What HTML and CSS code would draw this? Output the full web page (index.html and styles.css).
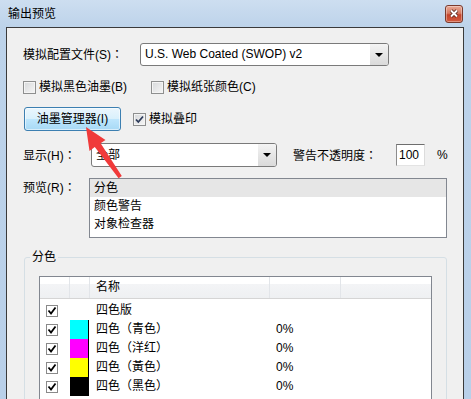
FILE: index.html
```html
<!DOCTYPE html>
<html><head><meta charset="UTF-8">
<title>输出预览</title>
<link rel="stylesheet" href="styles.css">
</head>
<body>
<div class="window">
  <div class="titlebar">
    <span class="title">输出预览</span>
    <span class="close">
      <svg width="10" height="9" viewBox="0 0 10 9">
        <path d="M2 1.5L8 7.5M8 1.5L2 7.5" stroke="#5b2a20" stroke-width="3.6" fill="none"/>
        <path d="M2 1.5L8 7.5M8 1.5L2 7.5" stroke="#fff" stroke-width="1.8" fill="none"/>
      </svg>
    </span>
  </div>

  <div class="client">
    <div class="row row-profile">
      <span class="lbl lbl-profile">模拟配置文件(S)<span class="colon">：</span></span>
      <div class="combo combo-profile">
        <span class="combo-text">U.S. Web Coated (SWOP) v2</span>
        <span class="combo-btn"><i class="tri"></i></span>
      </div>
    </div>

    <div class="row row-sim">
      <label class="check check-ink"><span class="box"></span>模拟黑色油墨(B)</label>
      <label class="check"><span class="box"></span>模拟纸张颜色(C)</label>
    </div>

    <div class="row row-manager">
      <button class="btn">油墨管理器(I)</button>
      <label class="check check-over">
        <span class="box">
          <svg width="11" height="11" viewBox="0 0 11 11"><path d="M2 5.5L4.3 8L9 2.5" stroke="#2d3b5a" stroke-width="1.8" fill="none"/></svg>
        </span>模拟叠印
      </label>
    </div>

    <div class="row row-display">
      <span class="lbl lbl-display">显示(H)<span class="colon">：</span></span>
      <div class="combo combo-display">
        <span class="combo-text">全部</span>
        <span class="combo-btn"><i class="tri"></i></span>
      </div>
      <span class="lbl lbl-warn">警告不透明度<span class="colon">：</span></span>
      <span class="num">100</span>
      <span class="pct">%</span>
    </div>

    <div class="row row-preview">
      <span class="lbl lbl-preview">预览(R)<span class="colon">：</span></span>
      <div class="listbox">
        <div class="item sel">分色</div>
        <div class="item">颜色警告</div>
        <div class="item">对象检查器</div>
      </div>
    </div>

    <fieldset class="group">
      <legend>分色</legend>
      <div class="table">
        <div class="thead">
          <span class="th"></span>
          <span class="th"></span>
          <span class="th th-name">名称</span>
          <span class="th"></span>
          <span class="th th-last"></span>
        </div>
        <div class="tbody">
          <div class="tr">
            <span class="td"><span class="mini"><svg width="10" height="10" viewBox="0 0 10 10"><path d="M1.5 4.5L4 7.5L8.5 1.5" stroke="#000" stroke-width="1.8" fill="none"/></svg></span></span>
            <span class="td"></span>
            <span class="td td-name">四色版</span>
            <span class="td"></span>
            <span class="td"></span>
          </div>
          <div class="tr">
            <span class="td"><span class="mini"><svg width="10" height="10" viewBox="0 0 10 10"><path d="M1.5 4.5L4 7.5L8.5 1.5" stroke="#000" stroke-width="1.8" fill="none"/></svg></span></span>
            <span class="td"><span class="swatch cyan"></span></span>
            <span class="td td-name">四色（青色）</span>
            <span class="td td-val">0%</span>
            <span class="td"></span>
          </div>
          <div class="tr">
            <span class="td"><span class="mini"><svg width="10" height="10" viewBox="0 0 10 10"><path d="M1.5 4.5L4 7.5L8.5 1.5" stroke="#000" stroke-width="1.8" fill="none"/></svg></span></span>
            <span class="td"><span class="swatch magenta"></span></span>
            <span class="td td-name">四色（洋红）</span>
            <span class="td td-val">0%</span>
            <span class="td"></span>
          </div>
          <div class="tr">
            <span class="td"><span class="mini"><svg width="10" height="10" viewBox="0 0 10 10"><path d="M1.5 4.5L4 7.5L8.5 1.5" stroke="#000" stroke-width="1.8" fill="none"/></svg></span></span>
            <span class="td"><span class="swatch yellow"></span></span>
            <span class="td td-name">四色（黃色）</span>
            <span class="td td-val">0%</span>
            <span class="td"></span>
          </div>
          <div class="tr">
            <span class="td"><span class="mini"><svg width="10" height="10" viewBox="0 0 10 10"><path d="M1.5 4.5L4 7.5L8.5 1.5" stroke="#000" stroke-width="1.8" fill="none"/></svg></span></span>
            <span class="td"><span class="swatch black"></span></span>
            <span class="td td-name">四色（黑色）</span>
            <span class="td td-val">0%</span>
            <span class="td"></span>
          </div>
        </div>
      </div>
    </fieldset>
  </div>

  <!-- red pointer drawn over the dialog -->
  <svg class="pointer" width="471" height="399" viewBox="0 0 471 399">
    <polygon points="86,127 105.5,140 100.6,143.2 121.8,176 118.6,178.2 94.8,147 89.5,151" fill="#f03a3a"/>
  </svg>
</div>
</body></html>
```

FILE: styles.css
```css
* {
  box-sizing: border-box;
}

body {
  margin: 0;
  font: 12px/16px "Liberation Sans", "Noto Sans CJK SC", sans-serif;
  color: #000;
  overflow: hidden;
}

.window {
  position: relative;
  width: 471px;
  height: 399px;
  overflow: hidden;
  background: linear-gradient(#cddef0, #bdd3ea 27px, #b9d0e9);
}

.titlebar {
  height: 27px;
  display: flex;
  align-items: center;
  justify-content: space-between;
  padding: 0 8px;
}

.title {
  padding-top: 1px;
}

.close {
  width: 18px;
  height: 18px;
  border: 1px solid #7b3a2c;
  border-radius: 3px;
  background: linear-gradient(#e9a894, #d67a62 45%, #c4432a 55%, #d25a3e);
  box-shadow: inset 0 0 0 1px rgba(255,255,255,0.35);
  display: flex;
  align-items: center;
  justify-content: center;
}

.client {
  margin-left: 6px;
  width: 458px;
  height: 380px;
  border: 1px solid #3a3a3a;
  border-bottom: none;
  background: #f0f0f0;
  padding: 15px 0 0 16px;
}

.colon {
  font-family: "Noto Sans CJK TC", sans-serif;
}

.row {
  display: flex;
  align-items: center;
}

.row-profile {
  height: 23px;
}

.lbl-profile {
  width: 117px;
}

.combo {
  display: flex;
  border: 1px solid #7a7a7a;
  border-radius: 3px;
  background: #fff;
  overflow: hidden;
}

.combo-profile {
  width: 249px;
  height: 23px;
}

.combo-text {
  flex: 1;
  padding-left: 4px;
  line-height: 21px;
}

.combo-btn {
  width: 18px;
  display: flex;
  align-items: center;
  justify-content: center;
  background: linear-gradient(#f4f4f4, #e6e6e6 50%, #dadada);
}

.tri {
  width: 0;
  height: 0;
  border-left: 4px solid transparent;
  border-right: 4px solid transparent;
  border-top: 4px solid #000;
}

.row-sim {
  margin-top: 12px;
  height: 18px;
}

.check {
  display: flex;
  align-items: center;
  gap: 3px;
}

.check-ink {
  width: 128px;
}

.box {
  width: 13px;
  height: 13px;
  border: 1px solid #8e8f8f;
  background: linear-gradient(135deg, #d6d8da, #f6f6f6);
  box-shadow: inset 0 0 0 1px #f4f4f4;
  display: flex;
  align-items: center;
  justify-content: center;
}

.row-manager {
  margin-top: 11px;
  height: 24px;
}

.btn {
  margin-left: 1px;
  width: 97px;
  height: 24px;
  padding: 0;
  font: inherit;
  color: #000;
  border: 1px solid #3c7fb1;
  border-radius: 3px;
  background: linear-gradient(#eaf6fd, #d9f0fc 50%, #bee6fd 50%, #a7d9f5);
  box-shadow: inset 0 0 0 1px rgba(255,255,255,0.55);
}

.check-over {
  margin-left: 12px;
}

.row-display {
  margin-top: 12px;
  height: 24px;
}

.lbl-display {
  width: 68px;
}

.combo-display {
  width: 186px;
  height: 24px;
}

.combo-display .combo-text {
  line-height: 22px;
}

.lbl-warn {
  margin-left: 16px;
  width: 103px;
}

.num {
  width: 29px;
  height: 22px;
  padding-left: 2px;
  line-height: 20px;
  background: #fff;
  border: 1px solid;
  border-color: #6e6e6e #dcdcdc #e3e3e3 #8c8c8c;
}

.pct {
  margin-left: 12px;
}

.row-preview {
  margin-top: 11px;
  align-items: flex-start;
}

.lbl-preview {
  width: 66px;
  padding-top: 1px;
}

.listbox {
  width: 358px;
  height: 60px;
  border: 1px solid #828790;
  background: #fff;
}

.item {
  height: 18px;
  line-height: 18px;
  padding-left: 4px;
}

.item.sel {
  background: #e6e6e6;
}

.group {
  margin: 12px 0 0 1px;
  padding: 0;
  width: 423px;
  height: 200px;
  border: 1px solid #d5dfe5;
  border-radius: 3px;
}

.group legend {
  margin-left: 5px;
  padding: 0 2px;
  line-height: 14px;
}

.table {
  margin: 12px 14px 0;
  height: 160px;
  border: 1px solid #828790;
  background: #fff;
}

.thead, .tr {
  display: grid;
  grid-template-columns: 30px 20px 180px 71px 1fr;
}

.thead {
  height: 22px;
  border-bottom: 1px solid #d5d5d5;
  background: linear-gradient(#fff, #fff 35%, #f3f4f6 35%, #eef0f2);
}

.th {
  border-right: 1px solid #e2e5e9;
  line-height: 21px;
}

.th-last {
  border-right: none;
}

.th-name {
  padding-left: 6px;
}

.tbody {
  padding-top: 2px;
}

.tr {
  height: 19px;
}

.td {
  display: flex;
  align-items: center;
  line-height: 19px;
}

.td-name, .td-val {
  padding-left: 6px;
}

.mini {
  margin-left: 6px;
  width: 12px;
  height: 12px;
  border: 1px solid #8a8a8a;
  background: #fff;
  display: flex;
  align-items: center;
  justify-content: center;
}

.swatch {
  width: 19px;
  height: 19px;
  border-right: 1px solid #000;
}

.cyan { background: #00ffff; }
.magenta { background: #ff00ff; }
.yellow { background: #ffff00; }
.black { background: #000; }

.pointer {
  position: absolute;
  left: 0;
  top: 0;
  pointer-events: none;
}
```
